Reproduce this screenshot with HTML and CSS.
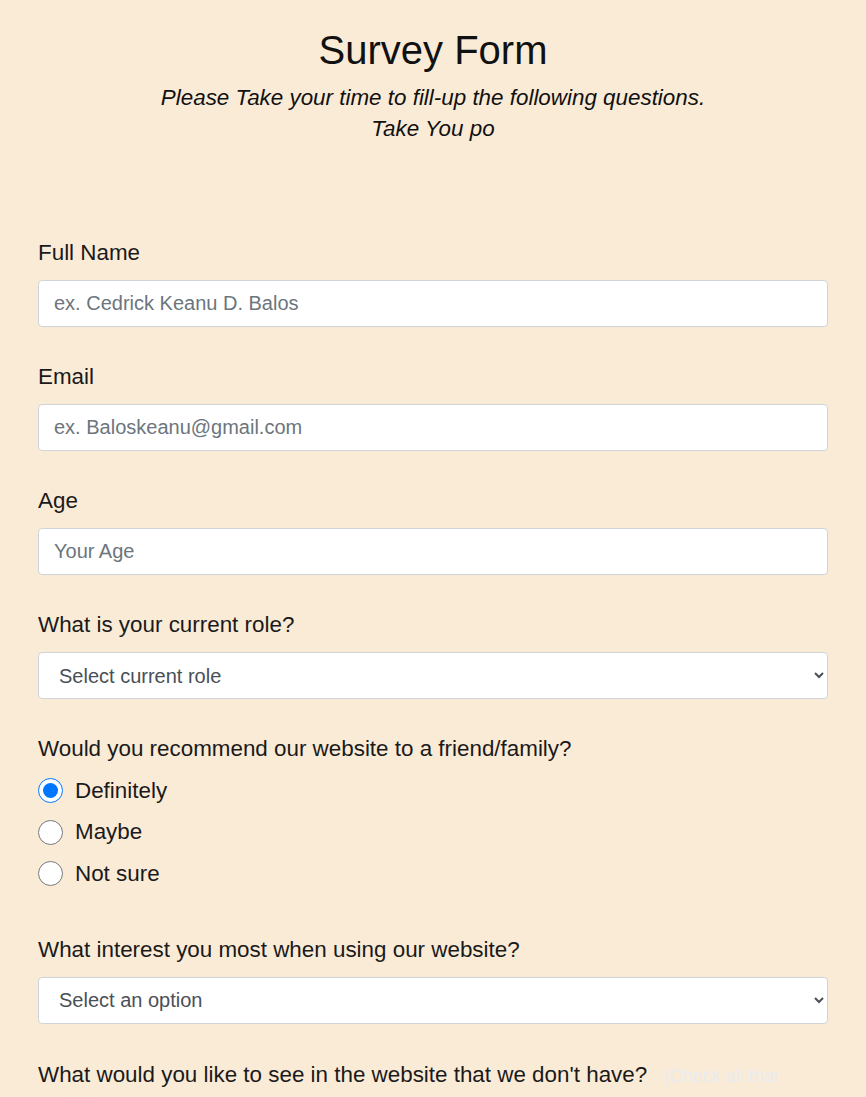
FILE: index.html
```html
<!DOCTYPE html>
<html lang="en">
<head>
<meta charset="utf-8">
<title>Survey Form</title>
<link rel="stylesheet" href="styles.css">
</head>
<body>
<header class="header">
  <h1 class="title">Survey Form</h1>
  <p class="subtitle">Please Take your time to fill-up the following questions.<br>Take You po</p>
</header>
<form class="form">
  <div class="group">
    <label class="label" for="name">Full Name</label>
    <input class="control" id="name" type="text" placeholder="ex. Cedrick Keanu D. Balos">
  </div>
  <div class="group">
    <label class="label" for="email">Email</label>
    <input class="control" id="email" type="email" placeholder="ex. Baloskeanu@gmail.com">
  </div>
  <div class="group">
    <label class="label" for="age">Age</label>
    <input class="control" id="age" type="number" placeholder="Your Age">
  </div>
  <div class="group">
    <label class="label" for="role">What is your current role?</label>
    <select class="control select" id="role">
      <option>Select current role</option>
    </select>
  </div>
  <div class="group group-radio">
    <p class="label">Would you recommend our website to a friend/family?</p>
    <label class="radio-row"><input class="radio" type="radio" name="rec" checked> Definitely</label>
    <label class="radio-row"><input class="radio" type="radio" name="rec"> Maybe</label>
    <label class="radio-row"><input class="radio" type="radio" name="rec"> Not sure</label>
  </div>
  <div class="group">
    <label class="label" for="interest">What interest you most when using our website?</label>
    <select class="control select" id="interest">
      <option>Select an option</option>
    </select>
  </div>
  <div class="group">
    <p class="label label-last">What would you like to see in the website that we don't have? <span class="hint">(Check all that apply)</span></p>
  </div>
</form>
</body>
</html>
```
FILE: styles.css
```css
html, body {
  margin: 0;
  padding: 0;
}
body {
  background: #faebd7;
  font-family: "Liberation Sans", Arial, sans-serif;
  color: #212529;
  padding: 0 38px;
}
.header {
  text-align: center;
  padding-top: 26px;
}
.title {
  margin: 0;
  font-size: 40px;
  line-height: 48px;
  font-weight: 400;
  color: #111;
}
.subtitle {
  margin: 8px 0 0;
  font-size: 22.4px;
  line-height: 31px;
  font-style: italic;
  color: #111;
}
.form {
  margin-top: 96px;
}
.group {
  display: flex;
  flex-direction: column;
  margin-bottom: 37px;
}
.label {
  margin: 0 0 14px;
  font-size: 22.4px;
  line-height: 26px;
  color: #1a1a1a;
}
.label-last {
  margin-top: 1px;
}
.control {
  box-sizing: border-box;
  height: 47px;
  width: 100%;
  margin: 0;
  padding: 0 15px;
  font-family: inherit;
  font-size: 20px;
  color: #495057;
  background: #fff;
  border: 1px solid #ced4da;
  border-radius: 4px;
}
.control::placeholder {
  color: #6c757d;
}
.select {
  padding: 0 10px 0 16px;
}
.group-radio {
  margin-bottom: 42px;
}
.group-radio .label {
  margin-bottom: 8px;
}
.radio-row {
  display: flex;
  align-items: center;
  gap: 12px;
  height: 41.5px;
  font-size: 22.4px;
  color: #1a1a1a;
}
.radio {
  width: 25px;
  height: 25px;
  margin: 0;
}
.hint {
  margin-left: 10px;
  font-size: 18px;
  color: #e9ecef;
}
```
